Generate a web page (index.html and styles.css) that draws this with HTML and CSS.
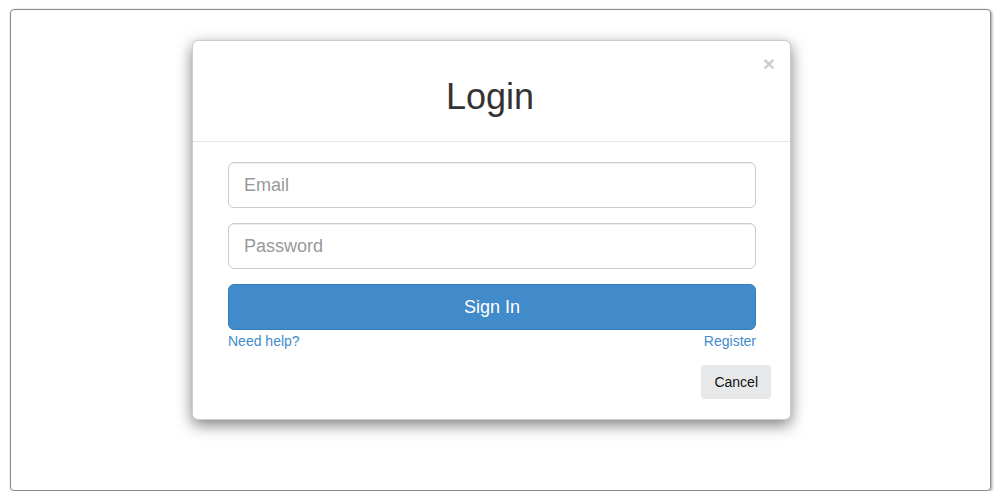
FILE: index.html
```html
<!DOCTYPE html>
<html>
<head>
<meta charset="utf-8">
<link rel="stylesheet" href="styles.css">
</head>
<body>
<div class="frame">
  <div class="modal">
    <div class="modal-header">
      <button class="close" type="button">&times;</button>
      <h2 class="title">Login</h2>
    </div>
    <div class="modal-body">
      <input class="field" type="text" placeholder="Email">
      <input class="field" type="password" placeholder="Password">
      <button class="btn-primary" type="button">Sign In</button>
      <div class="links">
        <a href="#">Need help?</a>
        <a href="#">Register</a>
      </div>
    </div>
    <div class="modal-footer">
      <button class="btn-cancel" type="button">Cancel</button>
    </div>
  </div>
</div>
</body>
</html>
```
FILE: styles.css
```css
* { box-sizing: border-box; }
html, body { margin: 0; padding: 0; background: #fff; }
body { font-family: "Liberation Sans", Arial, sans-serif; color: #333; }

.frame {
  margin: 9px 9px 0 10px;
  height: 482px;
  border: 1px solid #8a8a8a;
  border-radius: 4px;
  box-shadow: 1px 1px 3px rgba(0,0,0,0.4);
  padding-top: 30px;
  padding-left: 181px;
}

.modal {
  width: 599px;
  background: #fff;
  border: 1px solid rgba(0,0,0,0.2);
  border-radius: 6px;
  box-shadow: 0 5px 15px rgba(0,0,0,0.5);
}

.modal-header {
  position: relative;
  height: 101px;
  border-bottom: 1px solid #e5e5e5;
  padding-top: 34px;
  padding-right: 3px;
  text-align: center;
}
.title {
  margin: 0;
  font-size: 36px;
  font-weight: 400;
  line-height: 44px;
  color: #333;
}
.close {
  position: absolute;
  top: 12px;
  right: 15px;
  padding: 0;
  border: 0;
  background: none;
  font-family: "Liberation Sans", Arial, sans-serif;
  font-size: 21px;
  font-weight: 700;
  line-height: 1;
  color: #000;
  opacity: 0.2;
}

.modal-body {
  padding: 20px 34px 0 35px;
  display: flex;
  flex-direction: column;
}
.field {
  height: 46px;
  margin: 0 0 15px 0;
  padding: 10px 15px;
  border: 1px solid #ccc;
  border-radius: 6px;
  font-family: "Liberation Sans", Arial, sans-serif;
  font-size: 18px;
  color: #555;
  box-shadow: inset 0 1px 1px rgba(0,0,0,0.075);
}
.field::placeholder { color: #999; }

.btn-primary {
  height: 46px;
  border: 1px solid #357ebd;
  border-radius: 6px;
  background: #428bca;
  color: #fff;
  font-family: "Liberation Sans", Arial, sans-serif;
  font-size: 18px;
  padding: 0;
}

.links {
  display: flex;
  justify-content: space-between;
  margin-top: 1px;
  font-size: 14px;
  line-height: 20px;
}
.links a { color: #428bca; text-decoration: none; }

.modal-footer {
  display: flex;
  justify-content: flex-end;
  padding: 14px 19px 20px 0;
}
.btn-cancel {
  height: 34px;
  padding: 0 13px;
  border: 0;
  border-radius: 4px;
  background: #e7e8ea;
  color: #111;
  font-family: "Liberation Sans", Arial, sans-serif;
  font-size: 14px;
}
```
